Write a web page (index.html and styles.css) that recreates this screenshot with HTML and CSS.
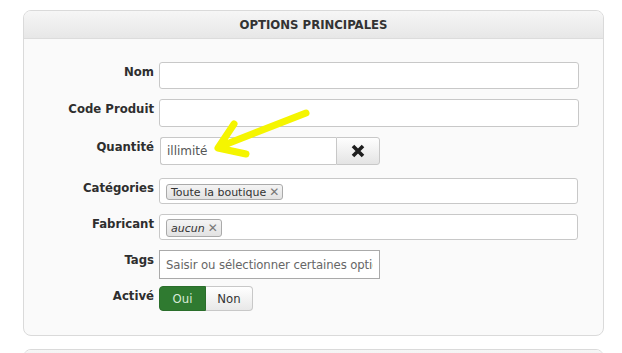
FILE: index.html
```html
<!DOCTYPE html>
<html lang="fr">
<head>
    <meta charset="UTF-8">
    <title>Options principales</title>
    <link rel="stylesheet" href="styles.css">
</head>
<body>

    <!-- Panneau principal -->
    <div class="panneau">
        <div class="panneau-titre">OPTIONS PRINCIPALES</div>
        <div class="panneau-corps">
            <div class="ligne">
                <label>Nom</label>
                <input type="text" class="champ champ-large">
            </div>
            <div class="ligne">
                <label>Code Produit</label>
                <input type="text" class="champ champ-large champ-haut">
            </div>
            <div class="ligne ligne-quantite">
                <label>Quantité</label>
                <div class="groupe">
                    <input type="text" class="champ champ-quantite" value="illimité">
                    <button class="bouton-effacer">
                        <svg width="14" height="14" viewBox="0 0 14 14">
                            <path d="M2 2 L12 12 M12 2 L2 12" stroke="#1e1e1e" stroke-width="3.6" fill="none"/>
                        </svg>
                    </button>
                </div>
            </div>
            <div class="ligne">
                <label>Catégories</label>
                <div class="choix">
                    <span class="puce">Toute la boutique <span class="croix">✕</span></span>
                </div>
            </div>
            <div class="ligne">
                <label>Fabricant</label>
                <div class="choix">
                    <span class="puce puce-vide"><em>aucun</em> <span class="croix">✕</span></span>
                </div>
            </div>
            <div class="ligne ligne-tags">
                <label>Tags</label>
                <input type="text" class="champ-tags" placeholder="Saisir ou sélectionner certaines options">
            </div>
            <div class="ligne">
                <label>Activé</label>
                <div class="bascule">
                    <button class="oui">Oui</button>
                    <button class="non">Non</button>
                </div>
            </div>
        </div>
    </div>

    <!-- Panneau suivant (coupé) -->
    <div class="panneau panneau-suivant">
        <div class="panneau-titre"></div>
    </div>

    <!-- Flèche jaune -->
    <svg class="fleche" width="622" height="353" viewBox="0 0 622 353">
        <path d="M306 113 L219 147 M234 124 L218 148 L246 154" stroke="#f5f500" stroke-width="7" stroke-linecap="round" stroke-linejoin="round" fill="none"/>
    </svg>

</body>
</html>
```

FILE: styles.css
```css
body {
    margin: 0;
    padding: 10px 18px 0 23px;
    background-color: white;
    font-family: "DejaVu Sans Condensed", "DejaVu Sans", sans-serif;
    color: #333;
    position: relative;
    overflow: hidden;
    height: 353px;
    box-sizing: border-box;
}
.panneau {
    width: 581px;
    box-sizing: border-box;
    border: 1px solid #dadada;
    border-radius: 8px;
    background-color: #fafafa;
    overflow: hidden;
}
.panneau-titre {
    height: 27px;
    line-height: 27px;
    text-align: center;
    font-size: 13px;
    font-weight: bold;
    color: #333;
    background: linear-gradient(#f6f6f6, #e7e7e7);
    border-bottom: 1px solid #dcdcdc;
}
.panneau-corps {
    padding: 23px 25px 24px 0;
    display: flex;
    flex-direction: column;
    gap: 10px;
}
.panneau-suivant {
    margin-top: 13px;
    height: 30px;
}
.ligne {
    display: grid;
    grid-template-columns: 130px 1fr;
    column-gap: 5px;
    align-items: start;
}
.ligne label {
    text-align: right;
    font-size: 13px;
    font-weight: bold;
    line-height: 18px;
    padding-top: 1px;
    color: #2e2e2e;
}
.ligne-quantite {
    margin-bottom: 3px;
}
.ligne-tags {
    margin-bottom: -3px;
}
.champ {
    height: 27px;
    box-sizing: border-box;
    border: 1px solid #c8c8c8;
    border-radius: 3px;
    background-color: white;
    font-family: "DejaVu Sans", Verdana, sans-serif;
    font-size: 12px;
    color: #555;
    padding: 0 6px;
    margin: 0;
}
.champ-large {
    width: 420px;
}
.champ-haut {
    height: 28px;
}
.groupe {
    display: flex;
    padding-left: 1px;
}
.champ-quantite {
    width: 176px;
    height: 28px;
    border-radius: 3px 0 0 3px;
    border-right: none;
}
.bouton-effacer {
    width: 44px;
    height: 28px;
    border: 1px solid #c8c8c8;
    border-radius: 0 3px 3px 0;
    background: linear-gradient(#fefefe, #e4e4e4);
    display: flex;
    align-items: center;
    justify-content: center;
    padding: 0;
    margin: 0;
}
.choix {
    width: 419px;
    height: 26px;
    box-sizing: border-box;
    border: 1px solid #c8c8c8;
    border-radius: 3px;
    background-color: white;
    padding: 5px 0 0 6px;
}
.puce {
    display: inline-flex;
    align-items: center;
    gap: 3px;
    height: 16px;
    box-sizing: border-box;
    border: 1px solid #aaa;
    border-radius: 3px;
    background: linear-gradient(#f4f4f4, #e2e2e2);
    padding: 0 3px 0 4px;
    font-family: "DejaVu Sans", Verdana, sans-serif;
    font-size: 11px;
    color: #333;
    vertical-align: top;
}
.puce-vide {
    height: 18px;
    margin-top: -1px;
}
.croix {
    font-size: 12px;
    font-weight: bold;
    color: #777;
}
.champ-tags {
    width: 221px;
    height: 29px;
    box-sizing: border-box;
    border: 1px solid #aaa;
    border-radius: 0;
    background-color: white;
    font-family: "DejaVu Sans Condensed", "DejaVu Sans", sans-serif;
    font-size: 13px;
    letter-spacing: -0.1px;
    padding: 0 6px;
    margin: 0;
}
.champ-tags::placeholder {
    color: #666;
}
.bascule {
    display: flex;
}
.bascule button {
    height: 25px;
    width: 47px;
    font-family: "DejaVu Sans Condensed", "DejaVu Sans", sans-serif;
    font-size: 13px;
    padding: 0;
    margin: 0;
}
.oui {
    background-color: #2f7a30;
    color: #d8ebd8;
    border: 1px solid #2a6e2b;
    border-radius: 4px 0 0 4px;
}
.non {
    background: linear-gradient(#ffffff, #e8e8e8);
    color: #333;
    border: 1px solid #c8c8c8;
    border-left: none;
    border-radius: 0 4px 4px 0;
}
.fleche {
    position: absolute;
    top: 0;
    left: 0;
    pointer-events: none;
}
```
